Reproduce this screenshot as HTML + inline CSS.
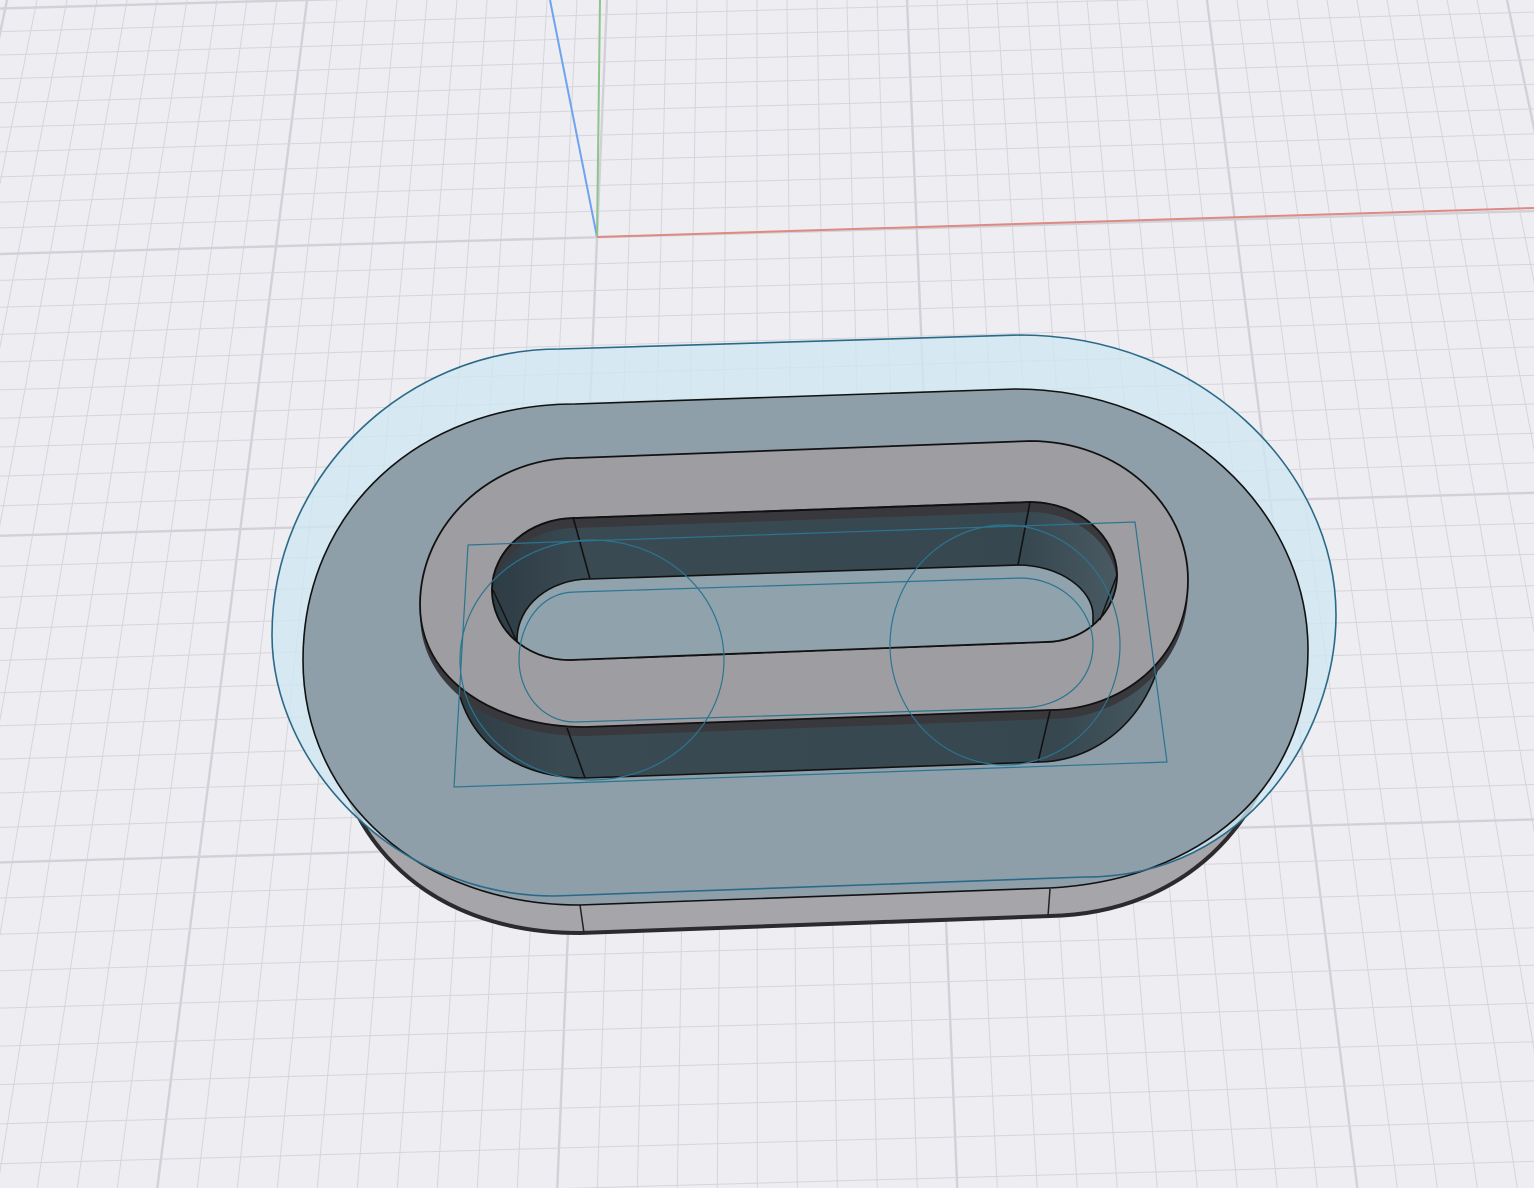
<!DOCTYPE html>
<html><head><meta charset="utf-8"><style>
html,body{margin:0;padding:0;background:#eeedf2;width:1534px;height:1188px;overflow:hidden}
svg{display:block}
</style></head><body>
<svg id="s" width="1534" height="1188" viewBox="0 0 1534 1188" xmlns="http://www.w3.org/2000/svg">
<defs>
<clipPath id="hole"><path d="M575,518 L1030,502 C1080,502 1117,538 1117,575 C1117,612 1085,642 1045,642 L570,660 C525,660 492,628 492,590 C492,550 530,518 575,518 Z"/></clipPath>
<linearGradient id="wallg" x1="0" y1="0" x2="1" y2="0">
<stop offset="0" stop-color="#2e3c44"/><stop offset="0.15" stop-color="#3a4a53"/><stop offset="0.85" stop-color="#37474f"/><stop offset="1" stop-color="#4a5a62"/></linearGradient>
</defs>
<g id="grid"></g>
<!-- axes -->
<line x1="550" y1="0" x2="597" y2="237" stroke="#6fa2f0" stroke-width="2"/>
<line x1="600" y1="0" x2="597" y2="237" stroke="#8cc48e" stroke-width="2"/>
<line x1="597" y1="237" x2="1534" y2="208" stroke="#de8a82" stroke-width="2"/>

<!-- plate side -->
<path d="M575,430 L1015,415 C1180,415 1290,520 1290,660 C1290,800 1200,913 1050,916 L580,933 C420,933 330,830 330,700 C330,560 420,430 575,430 Z" fill="#a6a5aa" stroke="#2b2b2e" stroke-width="4"/>
<line x1="580" y1="905" x2="584" y2="933" stroke="#222" stroke-width="1.5"/>
<line x1="1050" y1="889" x2="1048" y2="916" stroke="#222" stroke-width="1.5"/>

<!-- sketch fill -->
<path d="M560,349 L1020,335 C1200,335 1336,470 1336,615 C1336,730 1250,877 1085,877 L555,896 C390,896 272,760 272,635 C272,480 400,349 560,349 Z" fill="#cfe6f0" fill-opacity="0.8"/>

<!-- plate top -->
<path d="M575,404 L1015,389 C1180,389 1308,510 1308,650 C1308,790 1200,880 1050,888 L580,905 C420,905 303,800 303,660 C303,510 420,404 575,404 Z" fill="#8e9fa9" stroke="#111" stroke-width="1.6"/>

<!-- ring wall -->
<path d="M590,505 L1025,490 C1110,490 1165,550 1165,620 C1165,700 1110,760 1040,762 L585,778 C505,778 455,730 455,660 C455,590 510,505 590,505 Z" fill="url(#wallg)" stroke="#111" stroke-width="1.6"/>
<!-- dark band under ring edge -->
<path transform="translate(0,9)" d="M575,458 L1030,441 C1120,441 1188,505 1188,580 C1188,660 1120,710 1050,710 L585,727 C495,727 420,680 420,605 C420,525 490,458 575,458 Z" fill="#38383d"/>
<line x1="567" y1="728" x2="585" y2="778" stroke="#111" stroke-width="1.6"/>
<line x1="1050" y1="711" x2="1038" y2="762" stroke="#111" stroke-width="1.6"/>

<!-- ring top -->
<path d="M575,458 L1030,441 C1120,441 1188,505 1188,580 C1188,660 1120,710 1050,710 L585,727 C495,727 420,680 420,605 C420,525 490,458 575,458 Z" fill="#9e9da2" stroke="#111" stroke-width="1.8"/>

<!-- hole -->
<path d="M575,518 L1030,502 C1080,502 1117,538 1117,575 C1117,612 1085,642 1045,642 L570,660 C525,660 492,628 492,590 C492,550 530,518 575,518 Z" fill="#38383d" stroke="#111" stroke-width="1.8"/>
<g clip-path="url(#hole)">
<path transform="translate(0,10)" d="M575,518 L1030,502 C1080,502 1117,538 1117,575 C1117,612 1085,642 1045,642 L570,660 C525,660 492,628 492,590 C492,550 530,518 575,518 Z" fill="url(#wallg)"/>
<path d="M590,579 L1018,565 C1060,565 1093,590 1093,615 L1093,720 L517,720 L517,640 C517,605 550,579 590,579 Z" fill="#90a2ac" stroke="#111" stroke-width="1.6"/>
</g>
<path d="M575,518 L1030,502 C1080,502 1117,538 1117,575 C1117,612 1085,642 1045,642 L570,660 C525,660 492,628 492,590 C492,550 530,518 575,518 Z" fill="none" stroke="#111" stroke-width="1.8"/>
<line x1="573" y1="517" x2="590" y2="579" stroke="#111" stroke-width="1.6"/>
<line x1="1030" y1="502" x2="1018" y2="565" stroke="#111" stroke-width="1.6"/>
<line x1="493" y1="590" x2="517" y2="642" stroke="#111" stroke-width="1.4"/>
<line x1="1117" y1="575" x2="1100" y2="620" stroke="#111" stroke-width="1.4"/>

<!-- sketch strokes -->
<g fill="none" stroke="#2a7590" stroke-width="1.2">
<path d="M560,349 L1020,335 C1200,335 1336,470 1336,615 C1336,730 1250,877 1085,877 L555,896 C390,896 272,760 272,635 C272,480 400,349 560,349 Z" stroke="#2a6a88" stroke-width="1.6"/>
<path d="M468,545 L1135,522 L1167,762 L454,787 Z"/>
<ellipse cx="592" cy="660" rx="132" ry="120"/>
<ellipse cx="1005" cy="645" rx="115" ry="120"/>
<path d="M575,592 L1020,578 C1062,578 1093,610 1093,645 C1093,682 1062,708 1020,708 L575,722 C540,722 519,690 519,660 C519,625 540,592 575,592 Z"/>
</g>
</svg>
<script>
(function(){
var g=document.getElementById('grid'),h='';
var VX=756,VY=3564;
for(var m=-40;m<=60;m++){
 var x0=307+30*m;
 var xa=x0+(x0-VX)*(-10/VY), xb=x0+(x0-VX)*(1200/VY);
 if(Math.max(xa,xb)<-20||Math.min(xa,xb)>1560)continue;
 var maj=(m%10==0);
 h+='<line x1="'+xa.toFixed(1)+'" y1="-10" x2="'+xb.toFixed(1)+'" y2="1200" stroke="'+(maj?'#d2d1d7':'#d6d5db')+'" stroke-width="'+(maj?2.4:1)+'"/>';
}
var u0=1/(254+3564),k=1.8e-6;
for(var n=-14;n<=40;n++){
 var u=u0-n*k; var y=1/u-3564;
 if(y<-60||y>1260)continue;
 var maj=(n%10==0);
 h+='<line x1="0" y1="'+y.toFixed(1)+'" x2="1534" y2="'+(y-0.028*1534).toFixed(1)+'" stroke="'+(maj?'#d2d1d7':'#d6d5db')+'" stroke-width="'+(maj?2.4:1)+'"/>';
}
g.innerHTML=h;
})();
</script>
</body></html>
